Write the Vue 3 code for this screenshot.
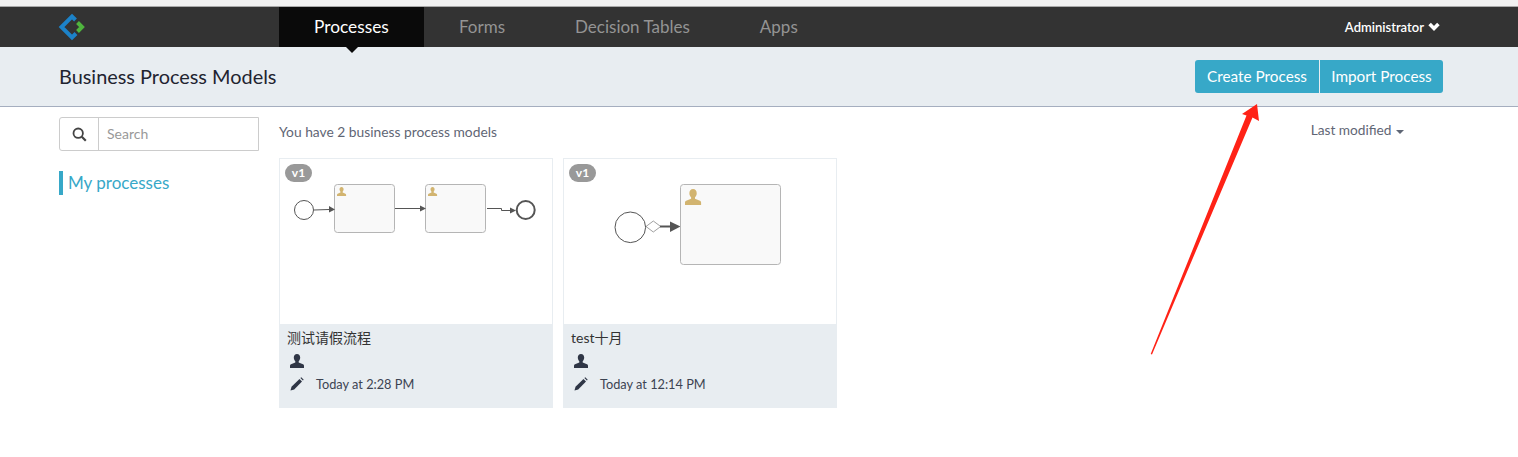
<template>
  <div class="page">
    <div class="top-strip"></div>

    <nav class="navbar">
      <div class="logo">
        <svg width="28" height="28" viewBox="0 0 28 28">
          <path d="M17.500 7 L14 3.500 L3.500 14 L14 24.500 L18 20.500" fill="none" stroke="#1c82c8" stroke-width="4" />
          <path d="M19.500 9.500 L24 14 L19.500 18.500" fill="none" stroke="#4fb53e" stroke-width="4" />
        </svg>
      </div>
      <ul class="tabs">
        <li v-for="tab in tabs" :key="tab" class="tab" :class="{ active: tab === 'Processes' }">{{ tab }}</li>
      </ul>
      <div class="user">
        Administrator
        <svg width="12" height="9" viewBox="0 0 12 9"><path d="M1.600 2 L6 6.400 L10.400 2" fill="none" stroke="#fff" stroke-width="3.600" /></svg>
      </div>
    </nav>

    <header class="subheader">
      <h1>Business Process Models</h1>
      <div class="btn-group">
        <button class="btn">Create Process</button>
        <button class="btn">Import Process</button>
      </div>
    </header>

    <div class="main">
      <aside class="sidebar">
        <div class="search">
          <span class="search-icon">
            <svg width="15" height="15" viewBox="0 0 15 15">
              <circle cx="6.200" cy="6.200" r="4.700" fill="none" stroke="#444" stroke-width="1.800" />
              <path d="M9.800 9.800 L13.800 13.800" stroke="#444" stroke-width="2.200" />
            </svg>
          </span>
          <input type="text" placeholder="Search" />
        </div>
        <div class="side-item">My processes</div>
      </aside>

      <section class="content">
        <div class="content-head">
          <span class="count">You have {{ models.length }} business process models</span>
          <span class="sort">Last modified <i class="caret"></i></span>
        </div>

        <div class="cards">
          <div v-for="model in models" :key="model.name" class="card">
            <div class="thumb">
              <span class="badge">v1</span>
              <svg v-if="model.diagram === 'two-tasks'" class="diagram" width="272" height="165" viewBox="0 0 272 165">
                <circle cx="24" cy="51" r="9.500" class="ev" />
                <rect x="54.500" y="25.500" width="60" height="48" rx="3" class="task" />
                <rect x="145.500" y="25.500" width="60" height="48" rx="3" class="task" />
                <path :d="userPath" fill="#d2b470" transform="translate(57 28) scale(0.65)" />
                <path :d="userPath" fill="#d2b470" transform="translate(148 28) scale(0.65)" />
                <path d="M34 51 L49 50.500" class="flow" />
                <path d="M49 47 L55 50.500 L49 53.500 Z" fill="#555" />
                <path d="M115 49.500 L140 49.500" class="flow" />
                <path d="M140 46.500 L146 49.500 L140 52.500 Z" fill="#555" />
                <path d="M207 49.500 L221.500 49.500 L221.500 51.500 L231 51.500" class="flow" />
                <path d="M230 48.500 L236 51.500 L230 54.500 Z" fill="#555" />
                <circle cx="245.700" cy="51" r="9" class="ev end" />
              </svg>
              <svg v-else class="diagram" width="272" height="165" viewBox="0 0 272 165">
                <circle cx="66.300" cy="68.300" r="15.300" class="ev" />
                <path d="M82 67.500 L89.300 62 L96.700 67.500 L89.300 73 Z" fill="#fff" stroke="#777" stroke-width="0.700" />
                <path d="M96 67.500 L107 67.500" stroke="#555" stroke-width="2" />
                <path d="M106 62.500 L116.500 67.500 L106 73 Z" fill="#555" />
                <rect x="116.500" y="25.500" width="100" height="80" rx="3" class="task" />
                <path :d="userPath" fill="#d2b470" transform="translate(121 30) scale(1.150)" />
              </svg>
            </div>
            <div class="info">
              <div class="name">{{ model.name }}</div>
              <div class="row">
                <svg class="glyph" width="14" height="14" viewBox="0 0 14 14"><path :d="userPath" fill="#2f3646" /></svg>
              </div>
              <div class="row">
                <svg class="glyph" width="14" height="14" viewBox="0 0 14 14">
                  <path d="M0.500 13.500 L1.500 9.800 L9.500 2 L12 4.500 L4.200 12.400 Z" fill="#2f3646" />
                  <path d="M10.400 1.100 L11.300 0.300 L13.700 2.700 L12.900 3.600 Z" fill="#2f3646" />
                </svg>
                <span class="date">{{ model.modified }}</span>
              </div>
            </div>
          </div>
        </div>
      </section>
    </div>

    <!-- annotation drawn on top of the screenshot -->
    <svg class="annotation" width="130" height="265" viewBox="1140 95 130 265">
      <path d="M1150.700 354 L1246.500 115.500 L1242 114 L1257 104 L1259 121 L1252.500 117.500 L1152 354.500 Z" fill="#ff2216" />
    </svg>
  </div>
</template>

<script setup>
const tabs = ['Processes', 'Forms', 'Decision Tables', 'Apps'];

const userPath =
  'M7 0C5 0 3.800 1.500 3.800 3.600c0 1.500.6 2.800 1.500 3.600v1.200L1 10.200C.4 10.500 0 11 0 11.800V14h14v-2.200c0-.8-.4-1.300-1-1.600L8.700 8.400V7.200c.9-.8 1.500-2.100 1.500-3.600C10.200 1.500 9 0 7 0z';

const models = [
  { name: '测试请假流程', modified: 'Today at 2:28 PM', diagram: 'two-tasks' },
  { name: 'test十月', modified: 'Today at 12:14 PM', diagram: 'one-task' },
];
</script>

<style>
html,
body {
  margin: 0;
  background: #fff;
}
</style>

<style scoped>
.page {
  position: relative;
  width: 1518px;
  height: 457px;
  overflow: hidden;
  font-family: Lato, "Noto Sans CJK SC", sans-serif;
  color: #333;
}

.top-strip {
  height: 6px;
  background: #f1f1f1;
  border-bottom: 1px solid #a9a9a9;
}

.navbar {
  height: 40px;
  display: flex;
  align-items: stretch;
  background: #333;
  padding-left: 58px;
}

.logo {
  width: 221px;
  display: flex;
  align-items: center;
}

.tabs {
  display: flex;
  margin: 0;
  padding: 0;
  list-style: none;
}

.tab {
  position: relative;
  padding: 0 35px;
  line-height: 40px;
  font-size: 17px;
  color: #949494;
}

.tab.active {
  width: 75px;
  font-size: 17.3px;
  white-space: nowrap;
  background: #0a0a0a;
  color: #fff;
}

.tab.active::after {
  content: "";
  position: absolute;
  left: 50%;
  top: 100%;
  margin-left: -6px;
  border-left: 6px solid transparent;
  border-right: 6px solid transparent;
  border-top: 6px solid #0a0a0a;
}

.user {
  margin-left: auto;
  margin-right: 78px;
  display: flex;
  align-items: center;
  gap: 4px;
  font-size: 13px;
  font-weight: 600;
  color: #fff;
  padding-bottom: 1px;
}

.subheader {
  height: 59px;
  display: flex;
  align-items: center;
  justify-content: space-between;
  padding: 0 75px 0 59px;
  background: #e8edf1;
  border-bottom: 1px solid #a5aebf;
}

.subheader h1 {
  margin: 0 0 2px;
  font-size: 19.900px;
  font-weight: 400;
  color: #1f2430;
}

.btn-group {
  display: flex;
  gap: 1px;
}

.btn {
  width: 124px;
  height: 33px;
  padding: 0 0 2px;
  border: 0;
  background: #37a8c8;
  color: #fff;
  font-family: inherit;
  font-size: 15.3px;
  border-radius: 3px 0 0 3px;
}

.btn + .btn {
  width: 123px;
  border-radius: 0 3px 3px 0;
}

.main {
  display: flex;
  gap: 20px;
  padding: 10px 0 0 59px;
}

.sidebar {
  width: 200px;
  flex: none;
}

.search {
  display: flex;
  height: 34px;
  box-sizing: border-box;
  border: 1px solid #ccc;
  border-radius: 3px 0 0 3px;
}

.search-icon {
  width: 38px;
  flex: none;
  display: flex;
  align-items: center;
  justify-content: center;
  border-right: 1px solid #ccc;
}

.search input {
  flex: 1;
  min-width: 0;
  border: 0;
  outline: 0;
  padding: 0 8px 2px;
  font-family: inherit;
  font-size: 14px;
  background: transparent;
}

.search input::placeholder {
  color: #999;
  opacity: 1;
}

.side-item {
  margin-top: 20px;
  height: 24px;
  line-height: 24px;
  padding-left: 5px;
  border-left: 4px solid #37a8c8;
  font-size: 17px;
  color: #37a8c8;
}

.content {
  flex: 1;
}

.content-head {
  display: flex;
  justify-content: space-between;
  height: 41px;
  padding-right: 114px;
}

.count {
  font-size: 13.8px;
  line-height: 30px;
  color: #5f6675;
}

.sort {
  font-size: 13.7px;
  line-height: 26px;
  color: #5f6675;
}

.caret {
  display: inline-block;
  vertical-align: middle;
  margin-left: 1px;
  border-left: 4px solid transparent;
  border-right: 4px solid transparent;
  border-top: 4px solid #5f6675;
}

.cards {
  display: flex;
  gap: 10px;
}

.card {
  width: 274px;
  height: 250px;
  box-sizing: border-box;
  border: 1px solid #e8edf1;
  display: flex;
  flex-direction: column;
}

.thumb {
  position: relative;
  height: 165px;
  flex: none;
}

.diagram {
  display: block;
}

.badge {
  position: absolute;
  left: 5px;
  top: 5px;
  width: 27px;
  height: 18px;
  border-radius: 9px;
  background: #999;
  color: #fff;
  font-size: 12px;
  font-weight: 700;
  line-height: 18px;
  text-align: center;
}

.ev {
  fill: #fff;
  stroke: #555;
  stroke-width: 1;
}

.ev.end {
  stroke-width: 2;
}

.task {
  fill: #f9f9f9;
  stroke: #b5b5b5;
  stroke-width: 1;
}

.flow {
  fill: none;
  stroke: #555;
  stroke-width: 1;
}

.info {
  flex: 1;
  background: #e8edf1;
  padding: 4px 7px 0;
}

.name {
  height: 21px;
  font-size: 14px;
  line-height: 20px;
  color: #333;
}

.row {
  display: flex;
  align-items: center;
  height: 23px;
  padding-left: 3px;
}

.glyph {
  flex: none;
}

.date {
  margin-left: 12px;
  font-size: 12.75px;
  color: #3c4352;
}

.annotation {
  position: absolute;
  left: 1140px;
  top: 95px;
}
</style>
